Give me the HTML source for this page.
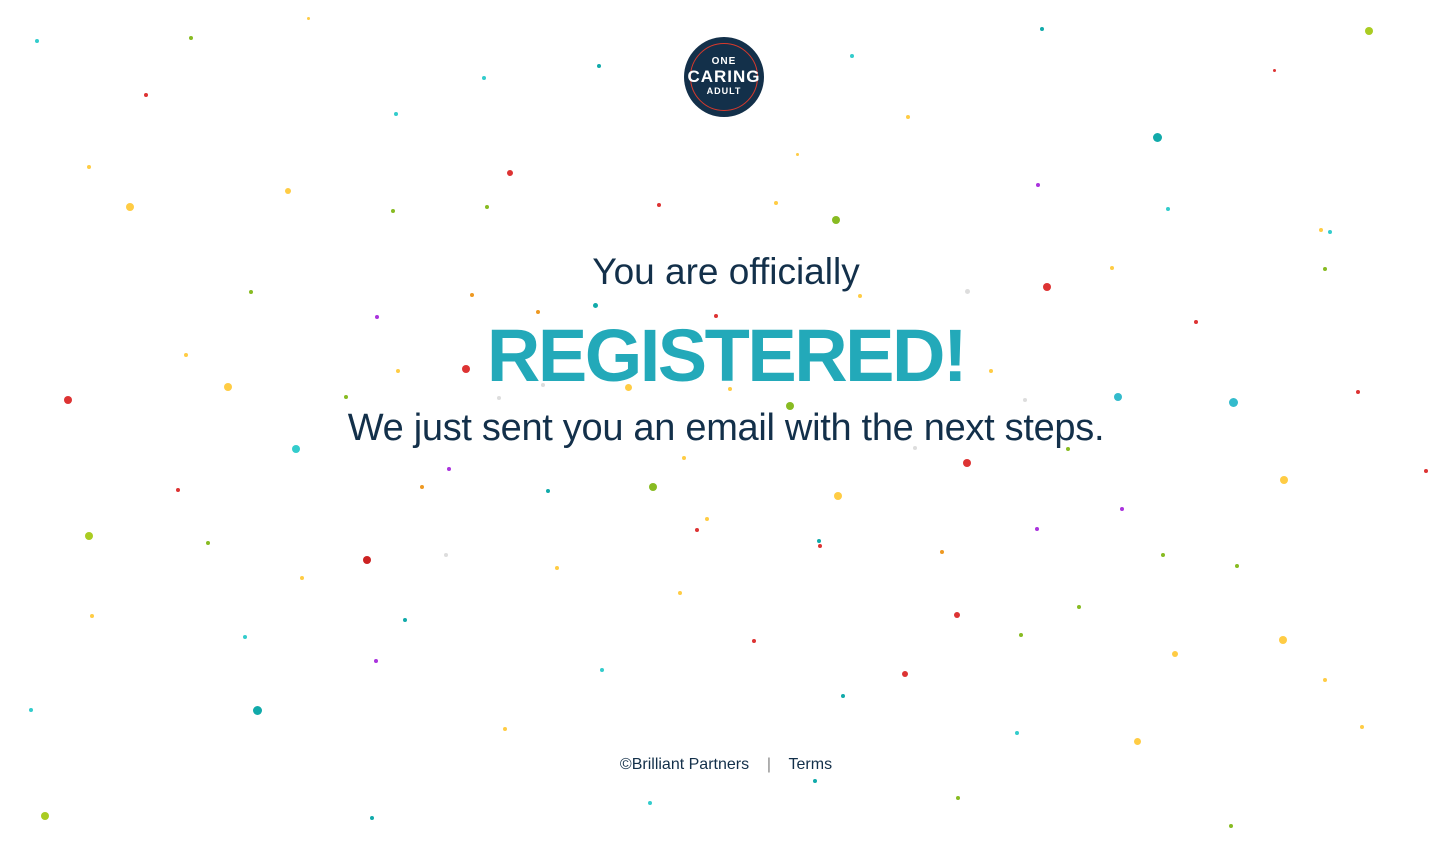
<!DOCTYPE html>
<html><head><meta charset="utf-8"><style>
html,body{margin:0;padding:0;background:#fff;width:1452px;height:849px;overflow:hidden;position:relative;font-family:"Liberation Sans",sans-serif;color:#13304a}
.d{position:absolute;border-radius:50%}
.logo{position:absolute;left:684px;top:37px;width:80px;height:80px;border-radius:50%;background:#13304a;color:#fff;text-align:center;font-weight:bold}
.logo .ring{position:absolute;left:6px;top:6px;width:66px;height:66px;border:1.5px solid #d8392b;border-radius:50%}
.t1{position:absolute;top:251px;left:0;width:1452px;text-align:center;font-size:37px}
.t2{position:absolute;top:313px;left:0;width:1452px;text-align:center;font-size:74px;font-weight:bold;color:#23a9b9;letter-spacing:-2.5px}
.t3{position:absolute;top:407px;left:0;width:1452px;text-align:center;font-size:38px;letter-spacing:-0.3px}
.foot{position:absolute;top:756px;left:0;width:1452px;text-align:center;font-size:16px}
</style></head><body>
<div class="logo"><div class="ring"></div>
<div style="position:absolute;top:19px;width:80px;font-size:10px;letter-spacing:1px">ONE</div>
<div style="position:absolute;top:30px;width:80px;font-size:17px;letter-spacing:1px">CARING</div>
<div style="position:absolute;top:49px;width:80px;font-size:9px;letter-spacing:1px">ADULT</div>
</div>
<div class="t1">You are officially</div>
<div class="t2">REGISTERED!</div>
<div class="t3">We just sent you an email with the next steps.</div>
<div class="foot">©Brilliant Partners &nbsp;&nbsp;&nbsp;<span style="color:#888">|</span>&nbsp;&nbsp;&nbsp; Terms</div>
<div id="dots"></div>
<script>
var D=[[37,41,4,'#3cc'],[191,38,4,'#8b2'],[308,18,3,'#fc4'],[146,95,4,'#d33'],[484,78,4,'#3cc'],[599,66,4,'#1aa'],[852,56,4,'#3cc'],[1042,29,4,'#1aa'],[1369,31,8,'#ac2'],[1274,70,3,'#d33'],[396,114,4,'#3cc'],[89,167,4,'#fc4'],[130,207,8,'#fc4'],[288,191,6,'#fc4'],[510,173,6,'#d33'],[393,211,4,'#8b2'],[487,207,4,'#8b2'],[659,205,4,'#d33'],[776,203,4,'#fc4'],[836,220,8,'#8b2'],[908,117,4,'#fc4'],[797,154,3,'#fc4'],[1157,137,9,'#1aa'],[1038,185,4,'#a3d'],[1168,209,4,'#3cc'],[1321,230,4,'#fc4'],[1330,232,4,'#3cc'],[1325,269,4,'#8b2'],[1112,268,4,'#fc4'],[1047,287,8,'#d33'],[967,291,5,'#ddd'],[1196,322,4,'#d33'],[251,292,4,'#8b2'],[377,317,4,'#a3d'],[472,295,4,'#e92'],[538,312,4,'#e92'],[595,305,5,'#1aa'],[716,316,4,'#d33'],[860,296,4,'#fc4'],[186,355,4,'#fc4'],[228,387,8,'#fc4'],[68,400,8,'#d33'],[346,397,4,'#8b2'],[398,371,4,'#fc4'],[466,369,8,'#d33'],[499,398,4,'#ddd'],[543,385,4,'#ddd'],[628,387,7,'#fc4'],[730,389,4,'#fc4'],[790,406,8,'#8b2'],[991,371,4,'#fc4'],[1025,400,4,'#ddd'],[1118,397,8,'#3bc'],[1233,402,9,'#3bc'],[1358,392,4,'#d33'],[296,449,8,'#3cc'],[449,469,4,'#a3d'],[422,487,4,'#e92'],[548,491,4,'#1aa'],[653,487,8,'#8b2'],[684,458,4,'#fc4'],[915,448,4,'#ddd'],[967,463,8,'#d33'],[1068,449,4,'#8b2'],[838,496,8,'#fc4'],[1284,480,8,'#fc4'],[1426,471,4,'#d33'],[178,490,4,'#d33'],[89,536,8,'#ac2'],[208,543,4,'#8b2'],[367,560,8,'#c22'],[446,555,4,'#ddd'],[557,568,4,'#fc4'],[697,530,4,'#d33'],[707,519,4,'#fc4'],[819,541,4,'#1aa'],[820,546,4,'#d33'],[942,552,4,'#e92'],[1037,529,4,'#a3d'],[1122,509,4,'#a3d'],[1163,555,4,'#8b2'],[1237,566,4,'#8b2'],[302,578,4,'#fc4'],[92,616,4,'#fc4'],[245,637,4,'#3cc'],[405,620,4,'#1aa'],[376,661,4,'#a3d'],[602,670,4,'#3cc'],[680,593,4,'#fc4'],[754,641,4,'#d33'],[957,615,6,'#d33'],[1021,635,4,'#8b2'],[1079,607,4,'#8b2'],[1283,640,8,'#fc4'],[905,674,6,'#d33'],[843,696,4,'#1aa'],[1175,654,6,'#fc4'],[1325,680,4,'#fc4'],[31,710,4,'#3cc'],[257,710,9,'#1aa'],[505,729,4,'#fc4'],[1017,733,4,'#3cc'],[1137,741,7,'#fc4'],[1362,727,4,'#fc4'],[45,816,8,'#ac2'],[372,818,4,'#1aa'],[650,803,4,'#3cc'],[815,781,4,'#1aa'],[958,798,4,'#8b2'],[1231,826,4,'#8b2']];
var h='';D.forEach(function(p){h+='<div class="d" style="left:'+(p[0]-p[2]/2)+'px;top:'+(p[1]-p[2]/2)+'px;width:'+p[2]+'px;height:'+p[2]+'px;background:'+p[3]+'"></div>'});
document.getElementById('dots').innerHTML=h;
</script>
</body></html>
